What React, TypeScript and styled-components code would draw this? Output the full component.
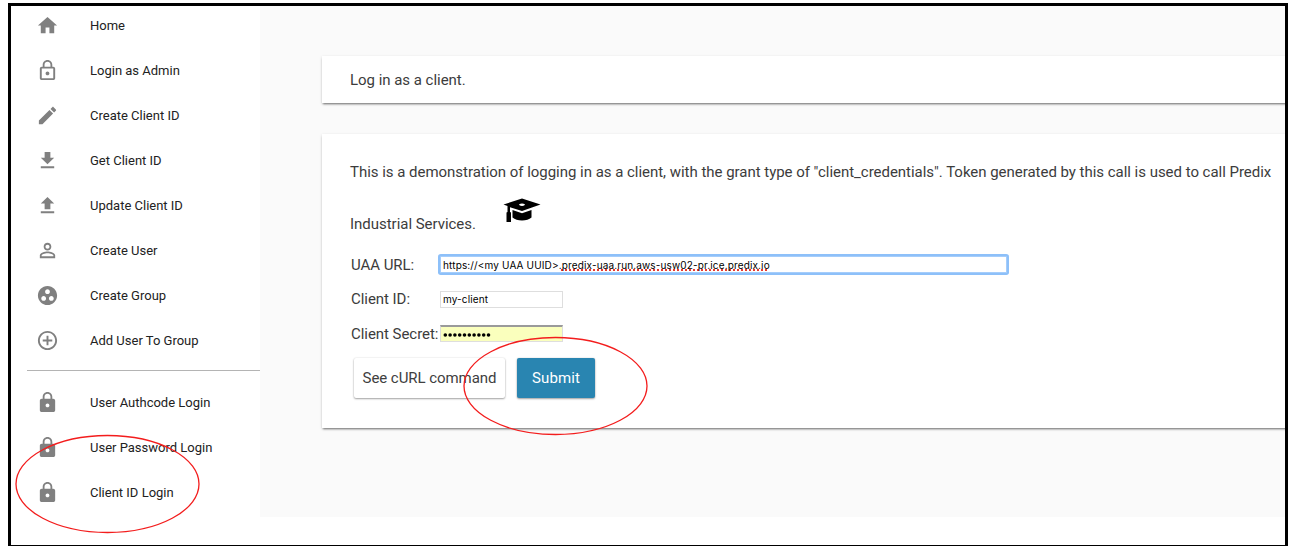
import React from "react";
import styled, { createGlobalStyle } from "styled-components";

const Global = createGlobalStyle`
  *, *::before, *::after { box-sizing: border-box; }
  body { margin: 0; background: #fff; font-family: Roboto, "Liberation Sans", sans-serif; overflow: hidden; }
`;

const Frame = styled.div`
  position: relative;
  width: 1280px;
  height: 543px;
  margin: 3px 0 0 8px;
  border: 3px solid #000;
  border-bottom-width: 1px;
  overflow: hidden;
  background: #fff;
`;

const Page = styled.div`
  display: flex;
  height: 511px;
`;

const Nav = styled.nav`
  width: 249px;
  flex: none;
  display: flex;
  flex-direction: column;
`;

const NavGroup = styled.div<{ $raised?: boolean }>`
  display: flex;
  flex-direction: column;
  gap: 5px;
  margin-top: ${(p) => (p.$raised ? -1 : 0)}px;
`;

const NavItem = styled.a`
  display: flex;
  align-items: center;
  height: 40px;
  padding-left: 25px;
  gap: 31px;
  color: #222;
  font-size: 13px;
  white-space: nowrap;
`;

const NavIcon = styled.svg`
  width: 23px;
  height: 23px;
  flex: none;
  fill: #808080;
`;

const Divider = styled.div`
  height: 1px;
  margin: 10px 0 11px 16px;
  background: #b4b4b4;
`;

const Main = styled.main`
  flex: 1;
  min-width: 0;
  padding: 50px 0 0 62px;
  background: #fafafa;
  overflow: hidden;
`;

const Card = styled.section<{ $height: number }>`
  width: 980px;
  height: ${(p) => p.$height}px;
  margin-bottom: 31px;
  padding-left: 28px;
  background: #fff;
  color: #3c3c3c;
  box-shadow: 0 2px 2px -1px rgba(0, 0, 0, 0.5), 0 1px 3px rgba(0, 0, 0, 0.14);
`;

const Title = styled.div`
  line-height: 49px;
  font-size: 15px;
  letter-spacing: -0.03px;
`;

const Copy = styled.p`
  margin: 0;
  padding-top: 13px;
  font-size: 15px;
  letter-spacing: -0.028px;
  line-height: 51px;
  white-space: nowrap;
`;

const LastLine = styled.span`
  display: flex;
  align-items: flex-start;
  height: 49.5px;
  gap: 27px;
  line-height: 53px;
`;

const Cap = styled.svg`
  width: 38px;
  height: 26px;
`;

const Field = styled.label`
  display: flex;
  align-items: center;
  height: 34.5px;
`;

const FieldName = styled.span`
  width: 90px;
  flex: none;
  font-size: 15px;
  letter-spacing: -0.05px;
  padding-left: 1px;
  white-space: nowrap;
`;

const Box = styled.span<{ $kind: "focus" | "plain" | "filled" }>`
  display: flex;
  align-items: center;
  width: ${(p) => (p.$kind === "focus" ? 567 : 123)}px;
  height: 17px;
  padding-left: 2px;
  color: #000;
  font-family: Inter, sans-serif;
  font-size: 10px;
  letter-spacing: 0.14px;
  white-space: pre;
  border: 1px solid ${(p) => (p.$kind === "focus" ? "#a5cdfb" : "#dedede")};
  background: ${(p) => (p.$kind === "filled" ? "#faffbd" : "#fff")};
  ${(p) => p.$kind === "focus" && "box-shadow: 0 0 0 2px #8dc0f9; border-radius: 1px;"}
  ${(p) => p.$kind === "filled" && "border-top: 2px solid #9a9a9a;"}
`;

const Misspelled = styled.span`
  text-decoration: underline dotted #e83a30 1.5px;
  text-underline-offset: 1px;
  text-decoration-skip-ink: none;
`;

const Dots = styled.svg`
  width: 50px;
  height: 6px;
  margin-top: 2px;
`;

const Actions = styled.div`
  display: flex;
  gap: 12px;
  padding: 6.5px 0 0 4px;
`;

const Button = styled.button<{ $primary?: boolean }>`
  width: ${(p) => (p.$primary ? 78 : 151)}px;
  height: 40px;
  padding: 0;
  border: 0;
  border-radius: 2px;
  font: 15px Roboto, sans-serif;
  letter-spacing: ${(p) => (p.$primary ? 0.1 : -0.06)}px;
  white-space: nowrap;
  color: ${(p) => (p.$primary ? "#fff" : "#404040")};
  background: ${(p) => (p.$primary ? "#2985b1" : "#fff")};
  box-shadow: 0 1px 2px rgba(0, 0, 0, 0.35), 0 0 2px rgba(0, 0, 0, 0.12);
`;

const Marker = styled.svg<{ $x: number; $y: number }>`
  position: absolute;
  left: ${(p) => p.$x}px;
  top: ${(p) => p.$y}px;
  fill: none;
  stroke: #f31d1d;
  stroke-width: 1.3;
`;

const icons = {
  home: "M10 20v-6h4v6h5v-8h3L12 3 2 12h3v8z",
  lockOutline:
    "M12 17c1.1 0 2-.9 2-2s-.9-2-2-2-2 .9-2 2 .9 2 2 2zm6-9h-1V6c0-2.76-2.24-5-5-5S7 3.24 7 6v2H6c-1.1 0-2 .9-2 2v10c0 1.1.9 2 2 2h12c1.1 0 2-.9 2-2V10c0-1.1-.9-2-2-2zM8.9 6c0-1.71 1.39-3.1 3.1-3.1s3.1 1.39 3.1 3.1v2H8.9V6zM18 20H6V10h12v10z",
  edit: "M3 17.25V21h3.75L17.81 9.94l-3.75-3.75L3 17.25zM20.71 7.04c.39-.39.39-1.02 0-1.41l-2.34-2.34c-.39-.39-1.02-.39-1.41 0l-1.83 1.83 3.75 3.75 1.83-1.83z",
  download: "M19 9h-4V3H9v6H5l7 7 7-7zM5 18v2h14v-2H5z",
  upload: "M9 16h6v-6h4l-7-7-7 7h4zm-4 2h14v2H5z",
  person:
    "M12 5.9c1.16 0 2.1.94 2.1 2.1s-.94 2.1-2.1 2.1S9.9 9.16 9.9 8s.94-2.1 2.1-2.1m0 9c2.97 0 6.1 1.46 6.1 2.1v1.1H5.9V17c0-.64 3.13-2.1 6.1-2.1M12 4C9.79 4 8 5.79 8 8s1.79 4 4 4 4-1.79 4-4-1.79-4-4-4zm0 9c-2.67 0-8 1.34-8 4v3h16v-3c0-2.66-5.33-4-8-4z",
  group:
    "M12 2C6.48 2 2 6.48 2 12s4.48 10 10 10 10-4.48 10-10S17.52 2 12 2zM8 17.5c-1.38 0-2.5-1.12-2.5-2.5s1.12-2.5 2.5-2.5 2.5 1.12 2.5 2.5-1.12 2.5-2.5 2.5zM9.5 8c0-1.38 1.12-2.5 2.5-2.5s2.5 1.12 2.5 2.5-1.12 2.5-2.5 2.5S9.5 9.38 9.5 8zm6.5 9.5c-1.38 0-2.5-1.12-2.5-2.5s1.12-2.5 2.5-2.5 2.5 1.12 2.5 2.5-1.12 2.5-2.5 2.5z",
  add: "M13 7h-2v4H7v2h4v4h2v-4h4v-2h-4V7zm-1-5C6.48 2 2 6.48 2 12s4.48 10 10 10 10-4.48 10-10S17.52 2 12 2zm0 18c-4.41 0-8-3.59-8-8s3.59-8 8-8 8 3.59 8 8-3.59 8-8 8z",
  lock: "M18 8h-1V6c0-2.76-2.24-5-5-5S7 3.24 7 6v2H6c-1.1 0-2 .9-2 2v10c0 1.1.9 2 2 2h12c1.1 0 2-.9 2-2V10c0-1.1-.9-2-2-2zm-6 9c-1.1 0-2-.9-2-2s.9-2 2-2 2 .9 2 2-.9 2-2 2zm3.1-9H8.9V6c0-1.71 1.39-3.1 3.1-3.1 1.71 0 3.1 1.39 3.1 3.1v2z",
};

type Entry = [keyof typeof icons, string];

const setup: Entry[] = [
  ["home", "Home"],
  ["lockOutline", "Login as Admin"],
  ["edit", "Create Client ID"],
  ["download", "Get Client ID"],
  ["upload", "Update Client ID"],
  ["person", "Create User"],
  ["group", "Create Group"],
  ["add", "Add User To Group"],
];

const logins: Entry[] = [
  ["lock", "User Authcode Login"],
  ["lock", "User Password Login"],
  ["lock", "Client ID Login"],
];

const Group = ({ items, raised }: { items: Entry[]; raised?: boolean }) => (
  <NavGroup $raised={raised}>
    {items.map(([icon, label]) => (
      <NavItem key={label}>
        <NavIcon viewBox="0 0 24 24">
          <path d={icons[icon]} />
        </NavIcon>
        {label}
      </NavItem>
    ))}
  </NavGroup>
);

export default function App() {
  return (
    <>
      <Global />
      <Frame>
        <Page>
          <Nav>
            <Group items={setup} raised />
            <Divider />
            <Group items={logins} />
          </Nav>
          <Main>
            <Card $height={47}>
              <Title>Log in as a client.</Title>
            </Card>
            <Card $height={294}>
              <Copy>
                This is a demonstration of logging in as a client, with the grant type of "client_credentials". Token generated by this call is used to call Predix
                <LastLine>
                  Industrial Services.
                  <Cap viewBox="0 0 38 26">
                    <path fillRule="evenodd" d="M19 0.5 37.5 6.5 19 13 7 9.2V14l1 .5V24H3.5V14.5l1-.5V8L.5 6.5ZM19 5.500a2.8 1.2 0 1 0 .01 0Z" />
                    <path d="M9.5 12 19 15.200 28.5 12V19.5Q25 22.500 19 22.500T9.5 19.5Z" />
                  </Cap>
                </LastLine>
              </Copy>
              <Field>
                <FieldName>UAA URL:</FieldName>
                <Box $kind="focus">
                  https://&lt;my UAA UUID&gt;.<Misspelled>predix-uaa.run.aws-usw02-pr.ice.predix.io</Misspelled>
                </Box>
              </Field>
              <Field>
                <FieldName>Client ID:</FieldName>
                <Box $kind="plain">my-client</Box>
              </Field>
              <Field>
                <FieldName>Client Secret:</FieldName>
                <Box $kind="filled">
                  <Dots viewBox="0 0 50 6">
                    {Array.from({ length: 10 }, (_, i) => (
                      <circle key={i} cx={2.3 + i * 4.8} cy={3} r={1.8} />
                    ))}
                  </Dots>
                </Box>
              </Field>
              <Actions>
                <Button>See cURL command</Button>
                <Button $primary>Submit</Button>
              </Actions>
            </Card>
          </Main>
        </Page>
        <Marker $x={4} $y={428} width="186" height="100">
          <ellipse cx="92.5" cy="50" rx="91.5" ry="48.5" />
        </Marker>
        <Marker $x={452} $y={330} width="186" height="100">
          <ellipse cx="92.5" cy="50" rx="91.5" ry="48.5" />
        </Marker>
      </Frame>
    </>
  );
}
